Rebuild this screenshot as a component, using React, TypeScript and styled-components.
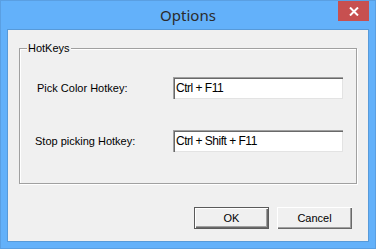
import React from "react";
import styled, { createGlobalStyle } from "styled-components";

const Global = createGlobalStyle`
  html, body { margin: 0; padding: 0; background: #62b0f8; }
  body { font-family: "Liberation Sans", Arial, sans-serif; }
  * { box-sizing: border-box; }
`;

const Window = styled.div`
  width: 376px;
  height: 249px;
  display: flex;
  flex-direction: column;
  background: #63b1fa;
  border: 1px solid #5a9fe2;
  overflow: hidden;
`;

const TitleBar = styled.div`
  height: 28px;
  display: grid;
  grid-template-columns: 1fr auto 1fr;
  align-items: start;
`;

const Title = styled.div`
  grid-column: 2;
  font-family: "Noto Sans", "Open Sans", sans-serif;
  font-size: 15px;
  line-height: 20px;
  padding-top: 4px;
  color: #2b2b2b;
`;

const CloseButton = styled.div`
  grid-column: 3;
  justify-self: end;
  margin-right: 6px;
  width: 31px;
  height: 20px;
  background: #c75050;
  display: flex;
  align-items: center;
  justify-content: center;
`;

const Client = styled.div`
  margin: 0 6px;
  height: 213px;
  border: 1px solid #579ad9;
  background: #f0f0f0;
  padding: 18px 11px 0 11px;
  display: flex;
  flex-direction: column;
  font-size: 11px;
  color: #000;
`;

const GroupBox = styled.div`
  position: relative;
  border: 1px solid #a0a0a0;
  box-shadow: 1px 1px 0 #fff, inset 1px 1px 0 #fff;
  padding: 28px 13px 31px 0;
  display: flex;
  flex-direction: column;
  gap: 31px;
`;

const Legend = styled.span`
  position: absolute;
  top: -7px;
  left: 7px;
  padding: 0 1px;
  background: #f0f0f0;
  line-height: 13px;
`;

const Row = styled.div<{ $indent: number }>`
  display: flex;
  align-items: center;
  padding-left: ${(p) => p.$indent}px;
`;

const Label = styled.span`
  line-height: 13px;
`;

const Input = styled.div`
  margin-left: auto;
  width: 170px;
  height: 22px;
  background: #fff;
  box-shadow: inset 1px 1px 0 #a0a0a0, inset 2px 2px 0 #696969,
    inset -1px -1px 0 #e3e3e3;
  padding: 4px 0 0 3px;
  font-size: 12px;
  line-height: 14px;
  letter-spacing: -0.5px;
`;

const ButtonRow = styled.div`
  display: flex;
  justify-content: flex-end;
  gap: 8px;
  margin-top: 23px;
  margin-right: 5px;
`;

const Button = styled.div<{ $default?: boolean }>`
  width: 75px;
  height: 22px;
  display: flex;
  align-items: center;
  justify-content: center;
  background: #f0f0f0;
  border: ${(p) => (p.$default ? "1px solid #5a5a5a" : "none")};
  box-shadow: inset 1px 1px 0 #fff, inset -1px -1px 0 #696969,
    inset -2px -2px 0 #a0a0a0;
  line-height: 13px;
`;

export default function App() {
  return (
    <>
      <Global />
      <Window>
        <TitleBar>
          <Title>Options</Title>
          <CloseButton>
            <svg width="10" height="9" viewBox="0 0 10 9">
              <path d="M1 0.5 L9 8.5 M9 0.5 L1 8.5" stroke="#fff" strokeWidth="2" />
            </svg>
          </CloseButton>
        </TitleBar>
        <Client>
          <GroupBox>
            <Legend>HotKeys</Legend>
            <Row $indent={17}>
              <Label>Pick Color Hotkey:</Label>
              <Input>Ctrl + F11</Input>
            </Row>
            <Row $indent={15}>
              <Label>Stop picking Hotkey:</Label>
              <Input>Ctrl + Shift + F11</Input>
            </Row>
          </GroupBox>
          <ButtonRow>
            <Button $default>OK</Button>
            <Button>Cancel</Button>
          </ButtonRow>
        </Client>
      </Window>
    </>
  );
}
